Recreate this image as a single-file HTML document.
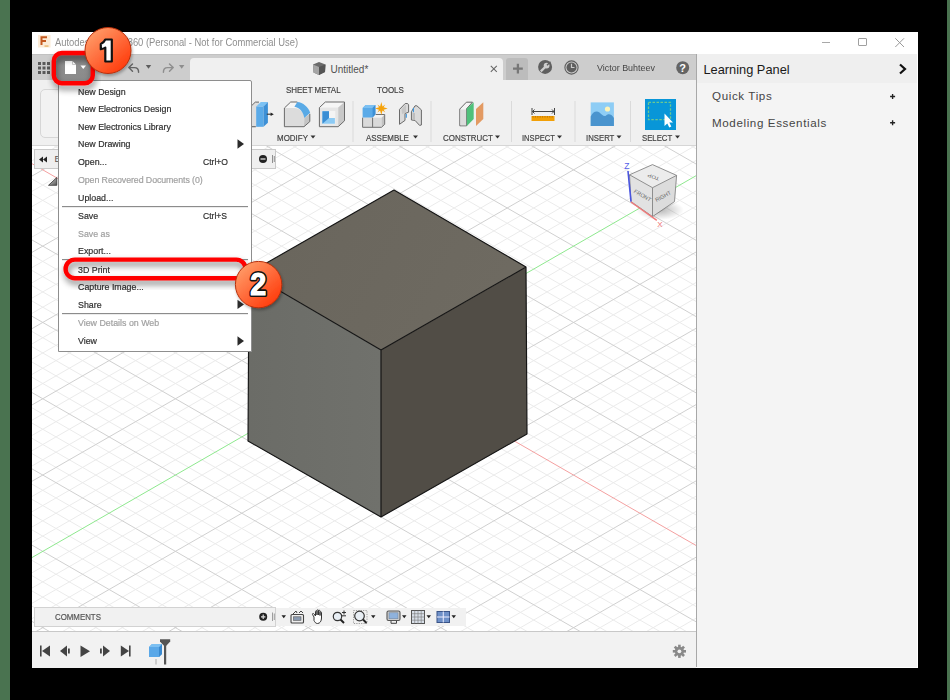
<!DOCTYPE html>
<html><head><meta charset="utf-8">
<style>
*{margin:0;padding:0;box-sizing:border-box}
html,body{width:950px;height:700px;overflow:hidden;background:#000;font-family:"Liberation Sans",sans-serif;position:relative}
.a{position:absolute}
svg.a{overflow:visible}
.t{position:absolute;white-space:nowrap;line-height:1}
.mi{position:absolute;margin-top:-0.2px;left:78px;font-size:9.5px;transform-origin:0 0;transform:scaleX(0.93);color:#2f2f2f;white-space:nowrap;line-height:1;-webkit-text-stroke:0.2px currentColor}
.gr{color:#a0a0a0}
.sc{position:absolute;margin-top:-0.2px;left:203.3px;font-size:9.5px;transform-origin:0 0;transform:scaleX(0.9);color:#2f2f2f;white-space:nowrap;line-height:1;-webkit-text-stroke:0.2px currentColor}
.sep{position:absolute;left:62px;width:186px;height:1px;margin-top:0.4px;background:#8c8c8c;box-shadow:0 1px 0 #ececec}
.rl{position:absolute;margin-top:0.3px;font-size:9.6px;color:#444;white-space:nowrap;line-height:1;transform-origin:0 0;transform:scaleX(0.83);-webkit-text-stroke:0.2px currentColor}
.vsep{position:absolute;top:101px;width:1px;height:41px;background:#dcdcdc}

</style></head><body>
<div class="a" style="left:0;top:0;width:10px;height:700px;background:#4a7350"></div>
<div class="a" style="left:947px;top:0;width:3px;height:700px;background:#4a7350"></div>
<!-- window -->
<div class="a" style="left:32px;top:32px;width:886px;height:636px;background:#fff"></div>
<!-- title bar -->
<svg class="a" style="left:38px;top:35px" width="13" height="13"><rect x="0" y="0" width="12.5" height="12.5" fill="#fcebd6"/>
<path d="M3.5,10 V2.3 H9 M3.5,6 H8" fill="none" stroke="#c4591f" stroke-width="2"/><rect x="6.5" y="10.2" width="4" height="1.8" fill="#edc184"/></svg>
<div class="t" style="left:55px;top:37.8px;font-size:10.4px;color:#8e8e8e;transform-origin:0 0;transform:scaleX(0.905)">Autodesk Fusion 360 (Personal - Not for Commercial Use)</div>
<div class="a" style="left:822px;top:41.5px;width:8px;height:1.2px;background:#a8a8a8"></div>
<div class="a" style="left:858px;top:38px;width:9px;height:8px;border:1px solid #a0a0a0;border-radius:1px"></div>
<svg class="a" style="left:894.5px;top:37.5px" width="10" height="10"><path d="M0.3 0.3L9 9M9 0.3L0.3 9" stroke="#999" stroke-width="1"/></svg>

<!-- tab bar -->
<div class="a" style="left:32px;top:54px;width:665px;height:26px;background:#cdcdcd;border-top:1.5px solid #c2c2c2"></div>

<!-- ribbon -->
<div class="a" style="left:32px;top:80px;width:665px;height:66px;background:#f0f0f0;border-bottom:1px solid #d6d6d6"></div>

<!-- viewport -->
<div class="a" style="left:32px;top:146px;width:665px;height:486px;background:#fff;overflow:hidden">
<svg class="a" style="left:0;top:0" width="665" height="486" viewBox="0 0 665 486">
<path d="M-5.00 -12.87 L670.00 -400.99 M-5.00 2.39 L670.00 -385.73 M-5.00 17.65 L670.00 -370.47 M-5.00 48.17 L670.00 -339.95 M-5.00 63.43 L670.00 -324.69 M-5.00 78.69 L670.00 -309.43 M-5.00 93.95 L670.00 -294.17 M-5.00 124.47 L670.00 -263.65 M-5.00 139.73 L670.00 -248.39 M-5.00 154.99 L670.00 -233.13 M-5.00 170.25 L670.00 -217.87 M-5.00 200.77 L670.00 -187.35 M-5.00 216.03 L670.00 -172.09 M-5.00 231.29 L670.00 -156.83 M-5.00 246.55 L670.00 -141.57 M-5.00 277.07 L670.00 -111.05 M-5.00 292.33 L670.00 -95.79 M-5.00 307.59 L670.00 -80.53 M-5.00 322.85 L670.00 -65.27 M-5.00 353.37 L670.00 -34.75 M-5.00 368.63 L670.00 -19.49 M-5.00 383.89 L670.00 -4.23 M-5.00 399.15 L670.00 11.03 M-5.00 429.67 L670.00 41.55 M-5.00 444.93 L670.00 56.81 M-5.00 460.19 L670.00 72.07 M-5.00 475.45 L670.00 87.33 M-5.00 505.97 L670.00 117.85 M-5.00 521.23 L670.00 133.11 M-5.00 536.49 L670.00 148.37 M-5.00 551.75 L670.00 163.63 M-5.00 582.27 L670.00 194.15 M-5.00 597.53 L670.00 209.41 M-5.00 612.79 L670.00 224.67 M-5.00 628.05 L670.00 239.93 M-5.00 658.57 L670.00 270.45 M-5.00 673.83 L670.00 285.71 M-5.00 689.09 L670.00 300.97 M-5.00 704.35 L670.00 316.23 M-5.00 734.87 L670.00 346.75 M-5.00 750.13 L670.00 362.01 M-5.00 765.39 L670.00 377.27 M-5.00 780.65 L670.00 392.53 M-5.00 811.17 L670.00 423.05 M-5.00 826.43 L670.00 438.31 M-5.00 841.69 L670.00 453.57 M-5.00 856.95 L670.00 468.83 M-5.00 887.47 L670.00 499.35 M-5.00 -412.49 L670.00 -24.37 M-5.00 -397.23 L670.00 -9.11 M-5.00 -381.97 L670.00 6.15 M-5.00 -351.45 L670.00 36.67 M-5.00 -336.19 L670.00 51.93 M-5.00 -320.93 L670.00 67.19 M-5.00 -305.67 L670.00 82.45 M-5.00 -275.15 L670.00 112.97 M-5.00 -259.89 L670.00 128.23 M-5.00 -244.63 L670.00 143.49 M-5.00 -229.37 L670.00 158.75 M-5.00 -198.85 L670.00 189.27 M-5.00 -183.59 L670.00 204.53 M-5.00 -168.33 L670.00 219.79 M-5.00 -153.07 L670.00 235.05 M-5.00 -122.55 L670.00 265.57 M-5.00 -107.29 L670.00 280.83 M-5.00 -92.03 L670.00 296.09 M-5.00 -76.77 L670.00 311.35 M-5.00 -46.25 L670.00 341.87 M-5.00 -30.99 L670.00 357.13 M-5.00 -15.73 L670.00 372.39 M-5.00 -0.47 L670.00 387.65 M-5.00 30.05 L670.00 418.17 M-5.00 45.31 L670.00 433.43 M-5.00 60.57 L670.00 448.69 M-5.00 75.83 L670.00 463.95 M-5.00 106.35 L670.00 494.47 M-5.00 121.61 L670.00 509.73 M-5.00 136.87 L670.00 524.99 M-5.00 152.13 L670.00 540.25 M-5.00 182.65 L670.00 570.77 M-5.00 197.91 L670.00 586.03 M-5.00 213.17 L670.00 601.29 M-5.00 228.43 L670.00 616.55 M-5.00 258.95 L670.00 647.07 M-5.00 274.21 L670.00 662.33 M-5.00 289.47 L670.00 677.59 M-5.00 304.73 L670.00 692.85 M-5.00 335.25 L670.00 723.37 M-5.00 350.51 L670.00 738.63 M-5.00 365.77 L670.00 753.89 M-5.00 381.03 L670.00 769.15 M-5.00 411.55 L670.00 799.67 M-5.00 426.81 L670.00 814.93 M-5.00 442.07 L670.00 830.19 M-5.00 457.33 L670.00 845.45 M-5.00 487.85 L670.00 875.97 M-5.00 503.11 L670.00 891.23" stroke="#ebebeb" stroke-width="1" fill="none"/>
<path d="M-5.00 32.91 L670.00 -355.21 M-5.00 109.21 L670.00 -278.91 M-5.00 185.51 L670.00 -202.61 M-5.00 261.81 L670.00 -126.31 M-5.00 338.11 L670.00 -50.01 M-5.00 490.71 L670.00 102.59 M-5.00 567.01 L670.00 178.89 M-5.00 643.31 L670.00 255.19 M-5.00 719.61 L670.00 331.49 M-5.00 795.91 L670.00 407.79 M-5.00 872.21 L670.00 484.09 M-5.00 -366.71 L670.00 21.41 M-5.00 -290.41 L670.00 97.71 M-5.00 -214.11 L670.00 174.01 M-5.00 -137.81 L670.00 250.31 M-5.00 -61.51 L670.00 326.61 M-5.00 91.09 L670.00 479.21 M-5.00 167.39 L670.00 555.51 M-5.00 243.69 L670.00 631.81 M-5.00 319.99 L670.00 708.11 M-5.00 396.29 L670.00 784.41 M-5.00 472.59 L670.00 860.71" stroke="#d0d0d0" stroke-width="1" fill="none"/>
<path d="M-5.00 414.41 L670.00 26.29" stroke="#8ee88e" stroke-width="1" fill="none"/>
<path d="M-5.00 14.79 L670.00 402.91" stroke="#f4a0a0" stroke-width="1" fill="none"/>
</svg>
</div>

<!-- timeline -->
<div class="a" style="left:32px;top:630.5px;width:664px;height:37.5px;background:#f2f2f2;border-top:1.2px solid #c8c8c8"></div>

<!-- learning panel -->
<div class="a" style="left:696px;top:54px;width:221px;height:613px;background:#f4f4f4;border-left:1px solid #a8a8a8"></div>

<!-- main cube -->
<svg class="a" style="left:0.4px;top:0.8px" width="950" height="700">
<defs><linearGradient id="lf" x1="0" y1="0" x2="1" y2="0"><stop offset="0" stop-color="#6b6c67"/><stop offset="1" stop-color="#70716c"/></linearGradient>
<linearGradient id="tf" x1="0" y1="0" x2="1" y2="0.3"><stop offset="0" stop-color="#69655c"/><stop offset="1" stop-color="#6e6a61"/></linearGradient></defs>
<polygon points="394,189 526,266 381,349 249,272" fill="url(#tf)"/>
<polygon points="249,272 381,349 381,516 248,440" fill="url(#lf)"/>
<polygon points="381,349 526,266 527,433 381,516" fill="#514d46"/>
<path d="M394,189 L526,266 L527,433 L381,516 L248,440 L249,272 Z M249,272 L381,349 L526,266 M381,349 L381,516" fill="none" stroke="#141414" stroke-width="1.15" stroke-linejoin="round"/>
</svg>

<!-- tab bar content -->
<svg class="a" style="left:38px;top:62px" width="12" height="12">
<g fill="#5a5a5a"><rect x="0" y="0" width="3" height="3"/><rect x="4.5" y="0" width="3" height="3"/><rect x="9" y="0" width="3" height="3"/><rect x="0" y="4.5" width="3" height="3"/><rect x="4.5" y="4.5" width="3" height="3"/><rect x="9" y="4.5" width="3" height="3"/><rect x="0" y="9" width="3" height="3"/><rect x="4.5" y="9" width="3" height="3"/><rect x="9" y="9" width="3" height="3"/></g></svg>
<!-- file button -->
<div class="a" style="left:54px;top:54px;width:38px;height:28px;background:linear-gradient(#777,#8e8e8e 40%,#8a8a8a);border-radius:4px"></div>
<svg class="a" style="left:64px;top:60px" width="24" height="16">
<path d="M1,1 H8.5 L12,4.5 V14 H1 Z" fill="#fff"/><path d="M8.5,1 V4.5 H12" fill="none" stroke="#bbb" stroke-width="0.8"/>
<path d="M16.5,5.5 H22 L19.25,9 Z" fill="#fff"/></svg>
<!-- undo redo -->
<svg class="a" style="left:126px;top:60px" width="60" height="16">
<path d="M6.5,4 L2.8,7.6 L6.5,11.2 M3.2,7.6 H8.5 C11.2,7.6 12.6,9.6 12.6,12.3" fill="none" stroke="#646464" stroke-width="1.45" stroke-linecap="round" stroke-linejoin="round"/>
<path d="M19.8,5 H25.2 L22.5,8.7 Z" fill="#5c5c5c"/>
<path d="M43.5,4 L47.2,7.6 L43.5,11.2 M46.8,7.6 H41.5 C38.8,7.6 37.4,9.6 37.4,12.3" fill="none" stroke="#8e8e8e" stroke-width="1.45" stroke-linecap="round" stroke-linejoin="round"/>
<path d="M53,5 H58.4 L55.7,8.7 Z" fill="#8e8e8e"/></svg>
<!-- doc tab -->
<div class="a" style="left:190px;top:58px;width:313px;height:23px;background:#f0f0f0;border-radius:4px 4px 0 0"></div>
<svg class="a" style="left:312px;top:61px" width="15" height="15">
<path d="M1,3.5 L7,1 L13.5,3.5 L13,11 L7,14 L1.5,11.5 Z" fill="#6a6a6a"/>
<path d="M1,3.5 L7,6 L7,14 L1.5,11.5 Z" fill="#a5a5a5"/><path d="M7,6 L13.5,3.5 L13,11 L7,14 Z" fill="#555"/></svg>
<div class="t" style="left:330.5px;top:64.8px;font-size:10px;color:#505050">Untitled*</div>
<svg class="a" style="left:490px;top:65px" width="8" height="8"><path d="M0.8,0.9 L6.8,6.9 M6.8,0.9 L0.8,6.9" stroke="#666" stroke-width="1.05"/></svg>
<div class="a" style="left:506px;top:58px;width:22px;height:22px;background:#bcbcbc;border-radius:3px 3px 0 0"></div>
<svg class="a" style="left:511.5px;top:62.5px" width="12" height="12"><path d="M5.9,0.8 V10.6 M1,5.7 H10.8" stroke="#777" stroke-width="2.3"/></svg>
<svg class="a" style="left:537.5px;top:60px" width="15" height="15"><circle cx="7.1" cy="6.9" r="7" fill="#5f5f5f"/>
<path d="M2.8,11.4 L7.4,6.8" stroke="#cdcdcd" stroke-width="2.3"/><circle cx="8.6" cy="5.6" r="2.9" fill="#cdcdcd"/><path d="M9,5.2 L12.5,1.7" stroke="#5f5f5f" stroke-width="1.5"/></svg>
<svg class="a" style="left:564px;top:60px" width="15" height="15"><circle cx="7.5" cy="7.5" r="6.6" fill="none" stroke="#5e5e5e" stroke-width="1.1"/><circle cx="7.5" cy="7.5" r="5" fill="#5e5e5e"/><path d="M7.5,3.8 V7.5 H10.5" fill="none" stroke="#cbcbcb" stroke-width="1.2"/></svg>
<div class="t" style="left:597px;top:63.6px;font-size:9.3px;color:#454545;transform-origin:0 0;transform:scaleX(0.96)">Victor Buhteev</div>
<svg class="a" style="left:676px;top:61px" width="14" height="14"><circle cx="6.7" cy="6.7" r="6.5" fill="#646464"/><text x="6.7" y="10.5" text-anchor="middle" font-family="Liberation Sans" font-weight="bold" font-size="11" fill="#fff">?</text></svg>

<!-- ribbon content -->
<div class="a" style="left:40px;top:89px;width:30px;height:49px;border:1px solid #d6d6d6;border-radius:5px;background:#f2f2f2"></div>
<div class="rl" style="left:286px;top:84.3px">SHEET METAL</div>
<div class="rl" style="left:376.5px;top:84.3px">TOOLS</div>
<div class="rl" style="left:277px;top:133px">MODIFY</div>
<div class="rl" style="left:366px;top:133px">ASSEMBLE</div>
<div class="rl" style="left:443px;top:133px">CONSTRUCT</div>
<div class="rl" style="left:522px;top:133px;transform:scaleX(0.79)">INSPECT</div>
<div class="rl" style="left:586px;top:133px;transform:scaleX(0.81)">INSERT</div>
<div class="rl" style="left:642px;top:133px;transform:scaleX(0.81)">SELECT</div>
<svg class="a" style="left:0;top:0" width="950" height="700">
<g fill="#333"><path d="M310.5,135.5 h5 l-2.5,3 z"/><path d="M413,135.5 h5 l-2.5,3 z"/><path d="M495,135.5 h5 l-2.5,3 z"/><path d="M557,135.5 h5 l-2.5,3 z"/><path d="M616.5,135.5 h5 l-2.5,3 z"/><path d="M675,135.5 h5 l-2.5,3 z"/></g>
<g fill="#dadada"><rect x="352.5" y="101" width="1" height="41"/><rect x="430.5" y="101" width="1" height="41"/><rect x="511" y="101" width="1" height="41"/><rect x="574.5" y="101" width="1" height="41"/><rect x="630" y="101" width="1" height="41"/></g>
<!-- press pull partial -->
<path d="M251.8,105.5 L255.3,102.1 H259 V127 H251.8 Z" fill="#dedede"/>
<path d="M251.8,105.5 L255.3,102.1 H259" fill="none" stroke="#666" stroke-width="1"/>
<rect x="251.8" y="126" width="4" height="1.3" fill="#777"/>
<path d="M256.2,106.5 L260.8,102.1 H267.9 L263.5,106.5 Z" fill="#7cc2f4"/>
<rect x="256.2" y="106.5" width="7.3" height="20.3" fill="#5aaae8"/>
<path d="M263.5,106.5 L267.9,102.1 V122.7 L263.5,126.8 Z" fill="#3d90d6"/>
<path d="M266.8,114.2 H271" stroke="#333" stroke-width="1.1"/><path d="M270.6,112.4 L273.8,114.2 L270.6,116 Z" fill="#222"/>
<!-- fillet -->
<path d="M284.4,108 L290.7,102 H297.3 C303,102.5 308.5,107 310.2,112.7 L309.8,121.6 L304,126.7 H284.4 Z" fill="#f6f6f6"/>
<path d="M284.4,108 H294.4 C299.5,108 304.3,112.5 304.3,117.9 V126.7 H284.4 Z" fill="#dcdcdc"/>
<path d="M304.3,117.9 L309.8,113.8 V121.6 L304,126.7 Z" fill="#c4c4c4"/>
<path d="M297.3,102 C303,102.5 308.5,107 310.2,112.7 L304.3,117.9 C303.3,112 299.5,107.5 294.4,106.8 Z" fill="#5aaae6"/>
<path d="M297.3,102 H290.7 L284.4,108 V126.7 H304 L309.8,121.6 V113.8" fill="none" stroke="#6a6a6a" stroke-width="1" stroke-linejoin="round"/>
<!-- shell -->
<path d="M319.4,107.6 L325.3,102 H344.5 V120.8 L338.2,126.7 H319.4 Z" fill="#f6f6f6"/>
<rect x="319.4" y="107.6" width="18.8" height="19.1" fill="#e6e6e6"/>
<path d="M338.2,107.6 L344.5,102 V120.8 L338.2,126.7 Z" fill="#c8c8c8"/>
<rect x="322" y="110.9" width="13.3" height="13.3" fill="#f4f4f4"/>
<path d="M322.4,111.3 H329 V117.9 H334.9 V123.8 H322.4 Z" fill="#8ccaf4"/>
<path d="M322.4,111.3 H329 V117.9 L322.4,123.8 Z" fill="#3a8ed4"/>
<path d="M319.4,107.6 L325.3,102 H344.5 V120.8 L338.2,126.7 H319.4 Z" fill="none" stroke="#6a6a6a" stroke-width="1" stroke-linejoin="round"/>
<!-- new component -->
<path d="M362.6,108 L365.6,105 H375.4 V114.6 L372.6,117.7 H362.6 Z" fill="#5aaae8"/>
<path d="M362.6,108 L365.6,105 H375.4 L372.6,108 Z" fill="#7cc0f2"/>
<path d="M372.6,108 L375.4,105 V114.6 L372.6,117.7 Z" fill="#3d90d6"/>
<path d="M372.6,117.7 L375.8,114.5 H384.7 V124.3 L381.5,127.3 H372.6 Z" fill="#f2f2f2"/>
<rect x="362.6" y="117.7" width="19" height="9.6" fill="#dadada"/>
<path d="M381.6,117.7 L384.7,114.5 V124.3 L381.6,127.3 Z" fill="#c2c2c2"/>
<path d="M362.6,117.7 V127.3 H381.5 L384.7,124.3 V114.5 H375.8 M372.6,117.7 V127.3" fill="none" stroke="#707070" stroke-width="1" stroke-linejoin="round"/>
<path d="M381.3,101.9 L382.5,106.5 L385.2,104.6 L383.6,107.3 L387.7,108.5 L383.6,109.7 L385.2,112.4 L382.5,110.5 L381.3,114.9 L380.1,110.5 L377.4,112.4 L379,109.7 L375.1,108.5 L379,107.3 L377.4,104.6 L380.1,106.5 Z" fill="#f5a20a"/>
<!-- joint -->
<path d="M399.5,124.3 V109.4 L405.2,103.5 H407.6 L408.6,104.9 V112.2 L405,113.5 V120.4 Z" fill="#dadada" stroke="#6a6a6a" stroke-width="1" stroke-linejoin="round"/>
<path d="M401.5,109 L406,104.5 V112.5 L402,114 Z" fill="#c6c6c6"/>
<path d="M411.4,120 V111.7 L415,105.8 H416.9 L421.4,109.9 V125 L419.6,125.4 L415,120.4 Z" fill="#dadada" stroke="#6a6a6a" stroke-width="1" stroke-linejoin="round"/>
<path d="M412.5,113 L415,113 V120 L412.5,119.5 Z" fill="#bdbdbd"/>
<path d="M406.3,114 V117.8 M413.4,108 V112.2" stroke="#3a96e0" stroke-width="1.1"/>
<!-- construct -->
<path d="M459.8,125.8 V109 L466.4,102.2 H472.5 L466.6,108.7 V125.8 Z" fill="#f4f4f4" stroke="#666" stroke-width="1" stroke-linejoin="round"/>
<rect x="460.5" y="109.5" width="5.6" height="15.8" fill="#dcdcdc"/>
<path d="M466.7,108.6 L473.7,102.3 V119 L466.9,125.9 Z" fill="#4fc07a"/>
<path d="M476,109 L483.3,102.3 V119 L476,125.9 Z" fill="#e39a62"/>
<!-- inspect -->
<path d="M532,108 V115 M554.5,108 V115 M532.5,111.5 H554" stroke="#444" stroke-width="1"/>
<path d="M534.5,109.5 L532.5,111.5 L534.5,113.5 M552,109.5 L554,111.5 L552,113.5" fill="none" stroke="#444" stroke-width="1"/>
<rect x="531.5" y="116" width="23" height="5" fill="#f2a007"/><path d="M533.0,116 V117.6 M535.4,116 V117.6 M537.8,116 V117.6 M540.2,116 V117.6 M542.6,116 V117.6 M545.0,116 V117.6 M547.4,116 V117.6 M549.8,116 V117.6 M552.2,116 V117.6" stroke="#b86d00" stroke-width="0.8"/>
<!-- insert -->
<rect x="590.7" y="102.4" width="23.2" height="23.6" fill="#8ecdf5"/>
<path d="M590.7,126 V116.5 C592.5,112 596.5,110.2 599.5,112.5 C601.5,114 603,116.5 605.5,116 C608,113.5 611,113.5 613.9,118 V126 Z" fill="#4a94ce"/>
<circle cx="607.5" cy="109" r="2.6" fill="#fdf3b8"/>
<!-- select -->
<rect x="645" y="99" width="31" height="31" fill="#0896d8"/>
<rect x="648.5" y="102.3" width="22" height="17.3" fill="none" stroke="#6cc890" stroke-width="1.3" stroke-dasharray="2.5 1.5"/>
<path d="M664.5,113.5 V126 L667.3,123.5 L669.3,127.5 L671.3,126.5 L669.3,122.5 L673,122.5 Z" fill="#fff"/>
</svg>

<!-- learning panel content -->
<div class="a" style="left:697px;top:54px;width:220px;height:29px;background:#efefef"></div>
<div class="t" style="left:703.5px;top:63.5px;font-size:12.8px;color:#1a1a1a">Learning Panel</div>
<svg class="a" style="left:898px;top:63px" width="10" height="12"><path d="M2,1.5 L7,6 L2,10.5" fill="none" stroke="#111" stroke-width="2.2"/></svg>
<div class="t" style="left:712px;top:90.2px;font-size:11.6px;color:#454545;letter-spacing:0.62px">Quick Tips</div>
<div class="t" style="left:712px;top:116.7px;font-size:11.6px;color:#454545;letter-spacing:0.62px">Modeling Essentials</div>
<svg class="a" style="left:888px;top:93px" width="9" height="40"><path d="M4.6,1 V6 M2.1,3.5 H7.1 M4.6,27.2 V32.2 M2.1,29.7 H7.1" stroke="#222" stroke-width="1.35"/></svg>

<!-- viewcube -->
<svg class="a" style="left:0;top:0" width="950" height="700">
<defs>
<radialGradient id="vsh" cx="0.5" cy="0.5" r="0.5"><stop offset="0" stop-color="#000" stop-opacity="0.28"/><stop offset="1" stop-color="#000" stop-opacity="0"/></radialGradient>
</defs>
<ellipse cx="660" cy="210" rx="24" ry="10" fill="url(#vsh)"/>
<polygon points="652.5,164.6 676.6,175.4 652.5,187.7 629.5,174.8" fill="#ececec"/>
<polygon points="629.5,174.8 652.5,187.7 652.5,216.6 631,201.6" fill="#e2e2e2"/>
<polygon points="652.5,187.7 676.6,175.4 674.5,201.6 652.5,216.6" fill="#dcdcdc"/>
<path d="M652.5,164.6 L676.6,175.4 L674.5,201.6 L652.5,216.6 L631,201.6 L629.5,174.8 Z M629.5,174.8 L652.5,187.7 L676.6,175.4 M652.5,187.7 V216.6" fill="none" stroke="#777" stroke-width="0.8"/>
<path d="M628,171 L631,201.6" stroke="#4a55e0" stroke-width="1.6"/>
<path d="M631,202 L656.8,220.4" stroke="#f07a7a" stroke-width="1.4"/>
<text x="626.8" y="168.5" font-family="Liberation Sans" font-size="8.5" fill="#5560e8" text-anchor="middle">Z</text>
<text x="660" y="227" font-family="Liberation Sans" font-size="8" fill="#f07070" text-anchor="middle">X</text>
<text transform="translate(654,175.5) rotate(200) scale(1,0.8)" font-family="Liberation Sans" font-size="6" fill="#666" text-anchor="middle">TOP</text>
<text transform="translate(641.5,197) rotate(30) skewX(-5)" font-family="Liberation Sans" font-size="5.5" fill="#666" text-anchor="middle">FRONT</text>
<text transform="translate(664,198) rotate(-28)" font-family="Liberation Sans" font-size="5.5" fill="#666" text-anchor="middle">RIGHT</text>
</svg>

<!-- browser header (under menu) -->
<svg class="a" style="left:0;top:0" width="950" height="700">
<rect x="34.5" y="149.5" width="241" height="19" fill="#efefef" stroke="#c9c9c9" stroke-width="1"/>
<path d="M39,159.5 L43,156.5 V162.5 Z M43,159.5 L47,156.5 V162.5 Z" fill="#222"/>
<circle cx="263" cy="159" r="4" fill="#222"/><rect x="260.5" y="158.2" width="5" height="1.6" fill="#bbb"/>
<path d="M272.5,155 V163 M274.3,156 V162" stroke="#777" stroke-width="0.8"/>
<defs><linearGradient id="tg" x1="0" y1="0" x2="1" y2="1"><stop offset="0" stop-color="#ddd"/><stop offset="1" stop-color="#555"/></linearGradient></defs>
<path d="M48.5,185.3 L56.8,177.5 V185.3 Z" fill="url(#tg)" stroke="#333" stroke-width="0.8"/>
</svg>

<div class="t" style="left:54.5px;top:155px;font-size:9px;color:#555">B</div>


<!-- file menu -->
<div class="a" style="left:58px;top:80px;width:194px;height:272px;background:#fff;border:1px solid #8e8e8e;border-radius:0 2px 0 0"></div>
<div class="mi" style="top:87px">New Design</div>
<div class="mi" style="top:104.5px">New Electronics Design</div>
<div class="mi" style="top:122px">New Electronics Library</div>
<div class="mi" style="top:139.5px">New Drawing</div>
<div class="mi" style="top:157.5px">Open...</div><div class="sc" style="top:157.5px">Ctrl+O</div>
<div class="mi gr" style="top:175px;letter-spacing:-0.1px">Open Recovered Documents (0)</div>
<div class="mi" style="top:193px">Upload...</div>
<div class="sep" style="top:206px"></div>
<div class="mi" style="top:211px">Save</div><div class="sc" style="top:211px">Ctrl+S</div>
<div class="mi gr" style="top:229px">Save as</div>
<div class="mi" style="top:246.5px">Export...</div>
<div class="sep" style="top:259px"></div>
<div class="mi" style="top:265px">3D Print</div>
<div class="mi" style="top:282.5px">Capture Image...</div>
<div class="mi" style="top:300px">Share</div>
<div class="sep" style="top:313px"></div>
<div class="mi gr" style="top:318.5px">View Details on Web</div>
<div class="mi" style="top:336px">View</div>
<svg class="a" style="left:0;top:0" width="950" height="700"><g fill="#2a2a2a">
<path d="M237.5,139.3 L244,144 L237.5,148.7 Z"/><path d="M237.5,299.7 L244,304.4 L237.5,309.1 Z"/><path d="M237.5,336.3 L244,341 L237.5,345.7 Z"/></g></svg>

<!-- annotations -->
<svg class="a" style="left:0;top:0" width="950" height="700">
<defs>
<filter id="sh" x="-20%" y="-60%" width="140%" height="220%"><feGaussianBlur in="SourceAlpha" stdDeviation="3"/><feOffset dx="1" dy="3.8" result="b"/><feFlood flood-color="#000" flood-opacity="0.5"/><feComposite in2="b" operator="in"/><feMerge><feMergeNode/><feMergeNode in="SourceGraphic"/></feMerge></filter>
<filter id="sh2" x="-30%" y="-30%" width="160%" height="160%"><feGaussianBlur in="SourceAlpha" stdDeviation="1.5"/><feOffset dx="0.5" dy="1.5" result="b"/><feFlood flood-color="#000" flood-opacity="0.3"/><feComposite in2="b" operator="in"/><feMerge><feMergeNode/><feMergeNode in="SourceGraphic"/></feMerge></filter>
<linearGradient id="bg" x1="0.15" y1="0.1" x2="0.85" y2="0.9"><stop offset="0" stop-color="#ff9a66"/><stop offset="0.5" stop-color="#ff6a3a"/><stop offset="1" stop-color="#ff3c0c"/></linearGradient>
</defs>
<rect x="53.8" y="53" width="39" height="30.2" rx="8" fill="none" stroke="#ff0000" stroke-width="4.4" filter="url(#sh)"/>
<rect x="65.6" y="259.6" width="180" height="18.6" rx="9.3" fill="none" stroke="#ff0000" stroke-width="4.4" filter="url(#sh)"/>
<g filter="url(#sh2)">
<circle cx="108" cy="50.5" r="23" fill="url(#bg)" stroke="#b8300a" stroke-width="1"/>
<circle cx="258.6" cy="284.6" r="23.2" fill="url(#bg)" stroke="#b8300a" stroke-width="1"/>
</g>
<g font-family="Liberation Sans" font-weight="bold" text-anchor="middle">
<path d="M105.3,39.5 H111.8 V61.5 H105.3 V47.6 C104,48.4 102.6,48.9 100.8,49.2 V44 C102.8,43.2 104.3,41.8 105.3,39.5 Z" fill="#fff" stroke="#111" stroke-width="2.2" stroke-linejoin="round"/>
<text transform="translate(258.2,295.4) scale(0.94,1)" font-size="30.5" fill="#fff" stroke="#111" stroke-width="4.2" paint-order="stroke" stroke-linejoin="round">2</text>
<text transform="translate(258.2,295.4) scale(0.94,1)" font-size="30.5" fill="#fff" stroke="#fff" stroke-width="1">2</text>
</g>
</svg>

<!-- comments + nav bar -->
<svg class="a" style="left:0;top:0" width="950" height="700">
<rect x="34.5" y="607.5" width="241" height="19" fill="#f1f1f1" stroke="#d2d2d2" stroke-width="1"/>
<rect x="276" y="608" width="190" height="18" fill="#f1f1f1"/>
<circle cx="263.2" cy="616.8" r="4" fill="#222"/><path d="M261,616.8 H265.4 M263.2,614.6 V619" stroke="#ddd" stroke-width="1.2"/>
<path d="M272.5,612.5 V621 M274.3,613.5 V620" stroke="#888" stroke-width="0.8"/>
<path d="M281.5,615.3 H286 L283.75,618.3 Z" fill="#222"/>
<!-- orbit/camera -->
<rect x="291" y="614.5" width="12.5" height="8.5" rx="1" fill="#eee" stroke="#444" stroke-width="1.1"/>
<rect x="293.5" y="616.8" width="7.5" height="3.5" fill="#8a9ab0" stroke="#555" stroke-width="0.6"/>
<path d="M293,614 L296,611 L297,613 M299,613 L301,611 L303,613" fill="none" stroke="#444" stroke-width="1"/>
<!-- hand -->
<path d="M314,617 L312.5,614.5 C312,613.5 313.5,613 314,614 L315.5,616 V611.5 C315.5,610.5 317,610.5 317,611.5 V615 V610.5 C317,609.5 318.5,609.5 318.5,610.5 V615 V611 C318.5,610 320,610 320,611 V615.5 V612.5 C320,611.5 321.5,611.5 321.5,612.5 V618 C321.5,621 320,623.5 317.5,623.5 C315.5,623.5 314.8,622 314,620.5 Z" fill="#fff" stroke="#333" stroke-width="1"/>
<!-- zoom -->
<circle cx="337.5" cy="616.5" r="4.2" fill="#e8eef4" stroke="#333" stroke-width="1.2"/><path d="M340.5,619.5 L344,623" stroke="#222" stroke-width="2"/>
<path d="M344,610.5 V614.5 M342,612.5 H346 M342,615.8 H346" stroke="#333" stroke-width="1"/>
<!-- zoom window -->
<circle cx="359.5" cy="616" r="4.8" fill="#e8eef4" stroke="#333" stroke-width="1.2"/><path d="M363,619.5 L366.5,623" stroke="#222" stroke-width="2"/>
<path d="M353.5,610.5 H367 V623.5 H353.5 Z" fill="none" stroke="#777" stroke-width="0.7" stroke-dasharray="1.2 1.2"/>
<path d="M371,615.3 H375.5 L373.25,618.3 Z" fill="#222"/>
<!-- display -->
<rect x="387" y="611" width="13" height="9.5" rx="1.5" fill="#d0d0d0" stroke="#555" stroke-width="1.1"/><rect x="389" y="612.8" width="9" height="6" fill="#8fb2dc" stroke="#6a7d94" stroke-width="0.5"/>
<path d="M391,621 V623.3 H396.5 V621" fill="none" stroke="#444" stroke-width="1"/>
<path d="M402,615.3 H406.5 L404.25,618.3 Z" fill="#222"/>
<!-- grid -->
<rect x="411.5" y="610.5" width="13" height="13" fill="#d8dfe8" stroke="#555" stroke-width="1"/>
<path d="M414.7,610.5 V623.5 M418,610.5 V623.5 M421.2,610.5 V623.5 M411.5,613.7 H424.5 M411.5,617 H424.5 M411.5,620.2 H424.5" stroke="#777" stroke-width="0.6"/>
<path d="M426.5,615.3 H431 L428.75,618.3 Z" fill="#222"/>
<!-- viewports -->
<rect x="437" y="611.5" width="12.5" height="11" fill="#6e90c8" stroke="#3a5488" stroke-width="1"/>
<path d="M443.25,611.5 V622.5 M437,617 H449.5" stroke="#eef" stroke-width="1"/>
<path d="M451.5,615.3 H456 L453.75,618.3 Z" fill="#222"/>
</svg>

<!-- timeline content -->
<svg class="a" style="left:0;top:0" width="950" height="700"><g fill="#444">
<rect x="40" y="645.5" width="1.6" height="11"/><path d="M50,645.5 V656.5 L42,651 Z"/>
<path d="M60,651 L67,645.5 V656.5 Z"/><rect x="68" y="648.5" width="1.8" height="5"/>
<path d="M80.5,645.5 V657 L90,651.2 Z"/>
<rect x="100" y="648.5" width="1.8" height="5"/><path d="M103,645.5 L110,651 L103,656.5 Z"/>
<path d="M120.8,645.5 V656.5 L129,651 Z"/><rect x="129" y="645.5" width="1.6" height="11"/>
</g>
<path d="M149,647 L152,644 H162 V654 L159,657 H149 Z" fill="#5aa8e8"/><path d="M159,647 L162,644 V654 L159,657 Z" fill="#3a8ad0"/><path d="M149,647 L152,644 H162 L159,647 Z" fill="#7cc0f2"/>
<rect x="155.5" y="659" width="1" height="5.5" fill="#aaa"/>
<path d="M160,639.3 H170.2 V641.5 L166,646 H164.2 L160,641.5 Z" fill="#555"/><rect x="164" y="645" width="2.2" height="19.5" fill="#555"/>
<!-- gear -->
<g transform="translate(679.4,651.3)" fill="#8a8a8a"><rect x="-1.3" y="-6.6" width="2.6" height="3" transform="rotate(0)"/><rect x="-1.3" y="-6.6" width="2.6" height="3" transform="rotate(45)"/><rect x="-1.3" y="-6.6" width="2.6" height="3" transform="rotate(90)"/><rect x="-1.3" y="-6.6" width="2.6" height="3" transform="rotate(135)"/><rect x="-1.3" y="-6.6" width="2.6" height="3" transform="rotate(180)"/><rect x="-1.3" y="-6.6" width="2.6" height="3" transform="rotate(225)"/><rect x="-1.3" y="-6.6" width="2.6" height="3" transform="rotate(270)"/><rect x="-1.3" y="-6.6" width="2.6" height="3" transform="rotate(315)"/><circle r="4.6"/><circle r="1.9" fill="#f2f2f2"/></g>
</svg>
<div class="rl" style="left:54.5px;top:612px;color:#555;transform:scaleX(0.82)">COMMENTS</div>

</body></html>
